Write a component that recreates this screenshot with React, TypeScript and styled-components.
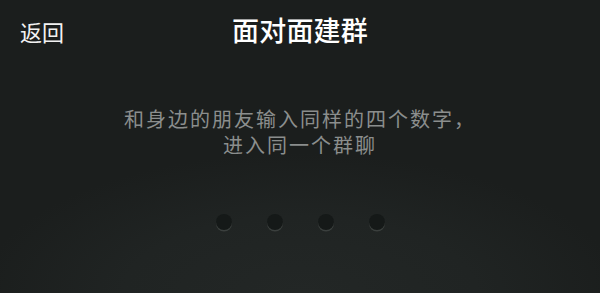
import React from "react";
import styled, { createGlobalStyle } from "styled-components";

const GlobalStyle = createGlobalStyle`
  html, body {
    margin: 0;
    padding: 0;
    background: #1b1e1d;
  }
  body {
    font-family: "Noto Sans CJK SC", "Noto Sans", sans-serif;
  }
`;

const Screen = styled.div`
  width: 600px;
  height: 293px;
  overflow: hidden;
  display: flex;
  flex-direction: column;
  background: radial-gradient(ellipse 320px 140px at 50% 100%, #232726 0%, #202423 55%, #1b1e1d 100%);
`;

const TopBar = styled.div`
  position: relative;
  height: 62px;
  display: flex;
  align-items: center;
  justify-content: center;
`;

const BackButton = styled.div`
  position: absolute;
  left: 20px;
  top: 15px;
  font-size: 22px;
  line-height: 32px;
  color: #f2f2f2;
`;

const Title = styled.div`
  font-size: 27px;
  line-height: 32px;
  margin-top: -2px;
  font-weight: 500;
  color: #ffffff;
  letter-spacing: 0.2px;
`;

const Hint = styled.div`
  margin-top: 44px;
  text-align: center;
  font-size: 20px;
  line-height: 26px;
  color: #8b8e8d;
  font-weight: 400;
  letter-spacing: 2px;
`;

const Dots = styled.div`
  margin-top: 56px;
  display: flex;
  justify-content: center;
  gap: 35px;
`;

const Dot = styled.div`
  width: 16px;
  height: 16px;
  border-radius: 50%;
  background: #151918;
  box-shadow: 0 1.5px 0 rgba(120, 125, 123, 0.3);
`;

export default function App() {
  return (
    <>
      <GlobalStyle />
      <Screen>
        <TopBar>
          <BackButton>返回</BackButton>
          <Title>面对面建群</Title>
        </TopBar>
        <Hint>
          和身边的朋友输入同样的四个数字，
          <br />
          进入同一个群聊
        </Hint>
        <Dots>
          {[0, 1, 2, 3].map((i) => (
            <Dot key={i} />
          ))}
        </Dots>
      </Screen>
    </>
  );
}
